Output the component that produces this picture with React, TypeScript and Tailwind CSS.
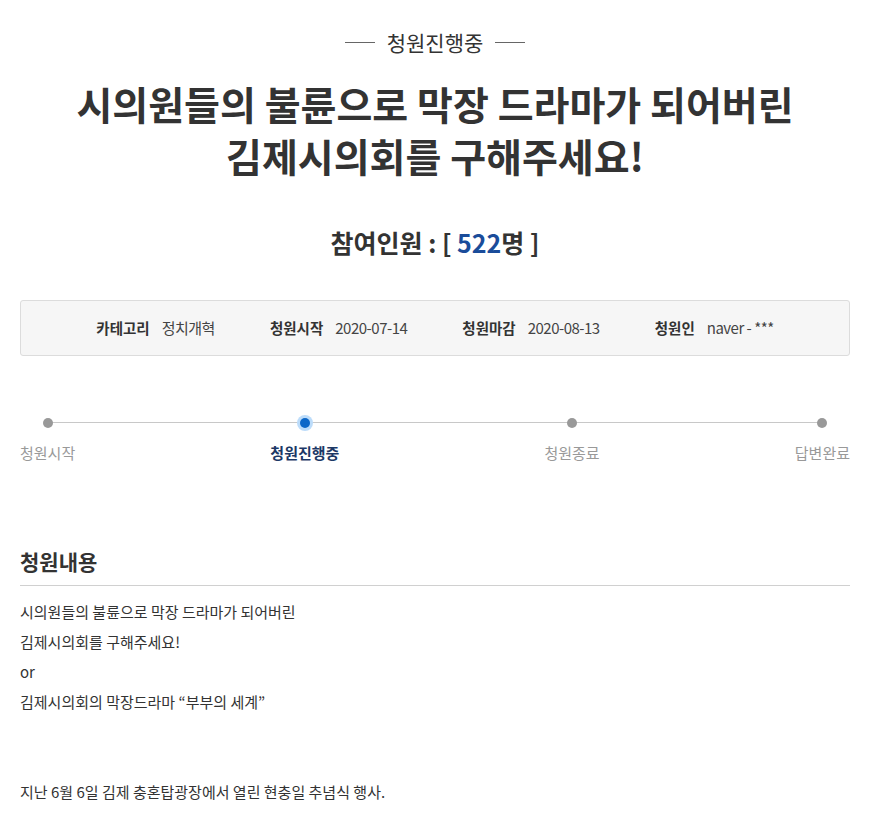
const font = { fontFamily: '"Noto Sans CJK KR", "Noto Sans", sans-serif' };

const info = [
  { label: "카테고리", value: "정치개혁" },
  { label: "청원시작", value: "2020-07-14" },
  { label: "청원마감", value: "2020-08-13" },
  { label: "청원인", value: "naver - ***" },
];

const steps = [
  { label: "청원시작", active: false },
  { label: "청원진행중", active: true },
  { label: "청원종료", active: false },
  { label: "답변완료", active: false },
];

const body = [
  "시의원들의 불륜으로 막장 드라마가 되어버린",
  "김제시의회를 구해주세요!",
  "or",
  "김제시의회의 막장드라마 “부부의 세계”",
  "",
  "",
  "지난 6월 6일 김제 충혼탑광장에서 열린 현충일 추념식 행사.",
];

export default function App() {
  return (
    <div className="min-h-[820px] w-[876px] bg-white text-[#333]" style={font}>
      <div className="ml-[20px] w-[830px]">
        {/* status */}
        <div className="flex items-center justify-center gap-[12px] pt-[28px] text-[21px] leading-[28px] text-[#333]">
          <span className="h-px w-[30px] bg-[#666]" />
          <span>청원진행중</span>
          <span className="h-px w-[30px] bg-[#666]" />
        </div>

        <h1 className="mt-[21px] text-center text-[39px] font-bold leading-[52px] text-[#333]">
          시의원들의 불륜으로 막장 드라마가 되어버린
          <br />
          김제시의회를 구해주세요!
        </h1>

        <h2 className="mt-[45px] text-center text-[25px] font-bold leading-[32px] text-[#333]">
          참여인원 : [ <span className="text-[#1a4c9a]">522</span>명 ]
        </h2>

        {/* info box */}
        <div className="mt-[42px] flex h-[56px] items-center justify-center gap-[55px] rounded-[3px] border border-[#dcdcdc] bg-[#f6f6f6]">
          {info.map((it) => (
            <div key={it.label} className="flex items-center gap-[12px]">
              <span className="text-[14.5px] font-bold text-[#333]">{it.label}</span>
              <span className="text-[15px] tracking-[-0.5px] text-[#444]">{it.value}</span>
            </div>
          ))}
        </div>

        {/* progress */}
        <div className="relative mt-[59px]">
          <div className="absolute left-[27px] right-[28px] top-[7px] h-px bg-[#c8c8c8]" />
          <div className="relative flex justify-between">
            {steps.map((s) => (
              <div
                key={s.label}
                className={s.active ? "mr-[10px] flex flex-col items-center gap-[12px]" : "flex flex-col items-center gap-[12px]"}
              >
                <div className="flex h-[16px] w-[16px] items-center justify-center">
                  {s.active ? (
                    <span className="flex h-[16px] w-[16px] items-center justify-center rounded-full bg-[#bcdcfa]">
                      <span className="h-[10px] w-[10px] rounded-full bg-[#0b67c8]" />
                    </span>
                  ) : (
                    <span className="h-[10px] w-[10px] rounded-full bg-[#999]" />
                  )}
                </div>
                <span
                  className={
                    s.active
                      ? "text-[15px] font-bold leading-[20px] text-[#1c3866]"
                      : "text-[15px] leading-[20px] text-[#999]"
                  }
                >
                  {s.label}
                </span>
              </div>
            ))}
          </div>
        </div>

        {/* content */}
        <h3 className="mt-[84px] border-b border-[#d0d0d0] pb-[10px] text-[21px] font-bold leading-[28px] text-[#333]">
          청원내용
        </h3>
        <div className="mt-[11px] text-[15px] leading-[30px] text-[#333]">
          {body.map((line, i) => (
            <p key={i} className="h-[30px]">
              {line}
            </p>
          ))}
        </div>
      </div>
    </div>
  );
}
